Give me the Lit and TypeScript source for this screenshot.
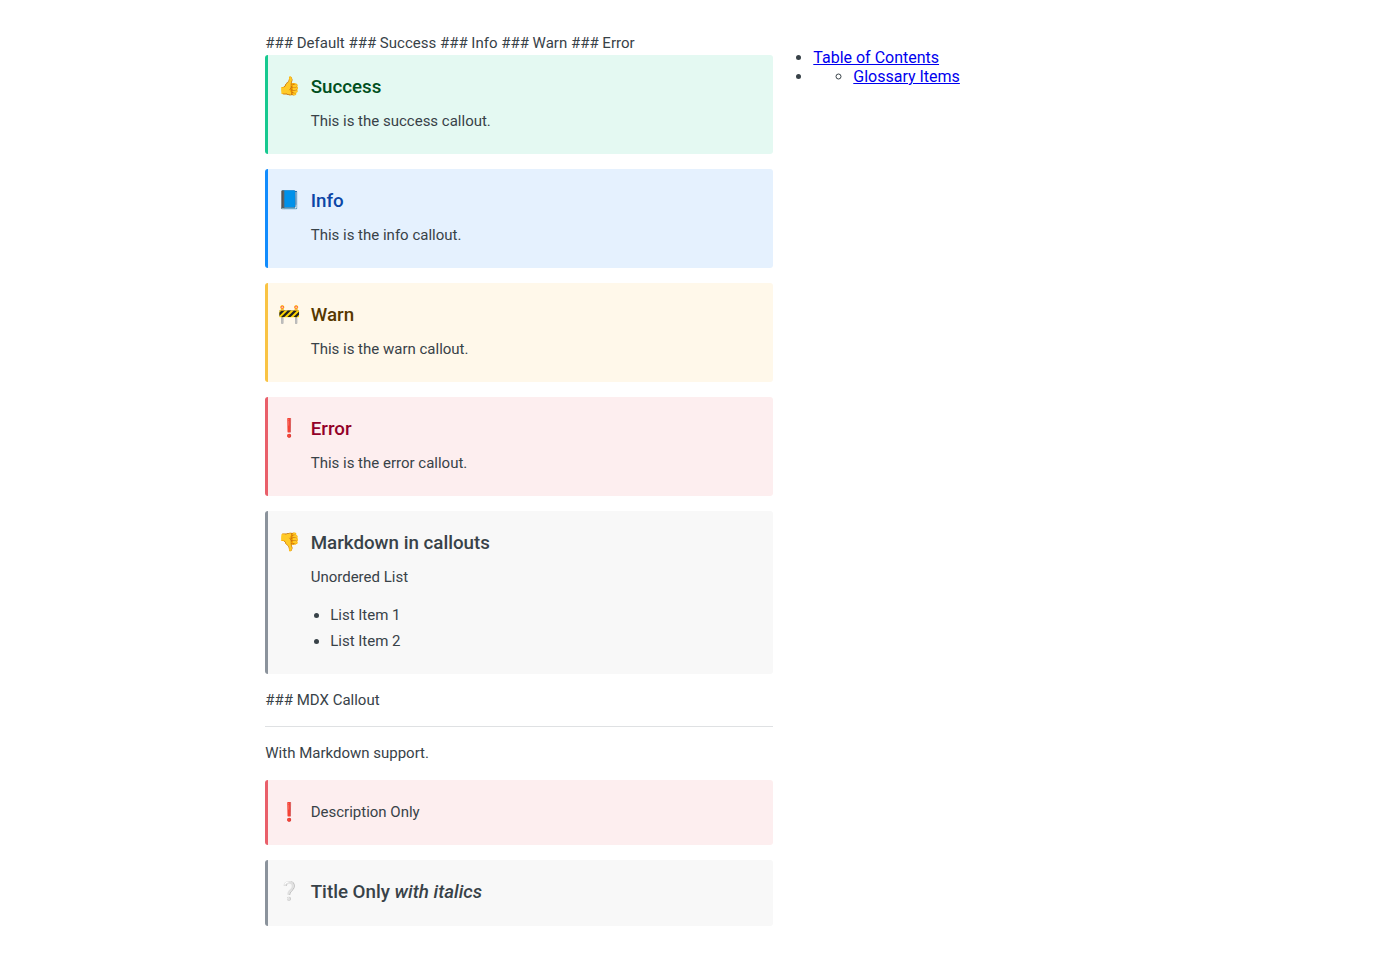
import { LitElement, html, css, nothing, TemplateResult } from "lit";
import { customElement, property } from "lit/decorators.js";

@customElement("rm-callout")
class Callout extends LitElement {
  @property() icon = "";
  @property({ attribute: false }) heading: TemplateResult | string = "";
  @property({ attribute: false }) body: TemplateResult | string = "";
  @property({ reflect: true }) theme = "default";
  static styles = css`
    :host {
      --background: #f8f8f8;
      --border: #8b939c;
      --title: #384248;
      display: block;
      margin-bottom: 15px;
    }
    :host([theme="okay"]) { --background: #e4f9f2; --border: #17c990; --title: #004f20; }
    :host([theme="info"]) { --background: #e5f1fe; --border: #118cfd; --title: #0b46a6; }
    :host([theme="warn"]) { --background: #fff8ea; --border: #f9c343; --title: #573800; }
    :host([theme="error"]) { --background: #fdeeef; --border: #e95f6a; --title: #930028; }
    .callout {
      display: block;
      margin: 0;
      padding: 20px 20px 20px 42.4px;
      border-left: 3px solid var(--border);
      border-radius: 3px;
      background: var(--background);
      color: #384248;
      font-size: 15px;
      line-height: 25px;
    }
    .heading {
      margin: 0;
      padding-bottom: 2px;
      color: var(--title);
      font-size: 18.75px;
      font-weight: 500;
      line-height: 24px;
    }
    .icon {
      float: left;
      width: 33px;
      margin-left: -33px;
      color: #384248;
      font-size: 18px;
      line-height: 24px;
    }
    .icon.titled { line-height: 22px; }
    .body { margin: 0; }
    .heading + .body { margin-top: 8px; }
    .body p { margin: 0 0 12px; }
    .body ul { margin: 0; padding-left: 19.5px; line-height: 26px; }
  `;
  render() {
    return html`<blockquote class="callout">
      <span class="icon ${this.heading ? "titled" : ""}">${this.icon}</span>
      ${this.heading ? html`<h3 class="heading">${this.heading}</h3>` : nothing}
      ${this.body ? html`<div class="body">${this.body}</div>` : nothing}
    </blockquote>`;
  }
}

@customElement("app-root")
class AppRoot extends LitElement {
  static styles = css`
    :host { display: block; font-family: Roboto, "Liberation Sans", sans-serif; color: #384248; }
    .page { display: flex; width: 869.4px; margin: 0 auto; padding-top: 31px; }
    .article { width: 507.7px; font-size: 15px; line-height: 24px; }
    .article p { margin: 0 0 16px; line-height: 22px; }
    .article .mdx { margin-bottom: 15px; }
    .rule { height: 1px; margin: 0 0 15px; border: 0; background: #dfe1e3; }
    .toc { margin: 17px 0 0; padding: 0 0 0 40.3px; font-size: 16px; line-height: 19px; }
    .toc ul { margin: 0; padding-left: 40px; }
    .toc a { color: #0000ee; }
  `;
  render() {
    return html`<main class="page">
      <article class="article">
        <div>### Default ### Success ### Info ### Warn ### Error</div>
        <rm-callout theme="okay" icon="👍" .heading=${"Success"} .body=${"This is the success callout."}></rm-callout>
        <rm-callout theme="info" icon="📘" .heading=${"Info"} .body=${"This is the info callout."}></rm-callout>
        <rm-callout theme="warn" icon="🚧" .heading=${"Warn"} .body=${"This is the warn callout."}></rm-callout>
        <rm-callout theme="error" icon="❗️" .heading=${"Error"} .body=${"This is the error callout."}></rm-callout>
        <rm-callout icon="👎" .heading=${"Markdown in callouts"}
          .body=${html`<p>Unordered List</p><ul><li>List Item 1</li><li>List Item 2</li></ul>`}></rm-callout>
        <p class="mdx">### MDX Callout</p>
        <hr class="rule" />
        <p>With Markdown support.</p>
        <rm-callout theme="error" icon="❗️" .body=${"Description Only"}></rm-callout>
        <rm-callout icon="❔" .heading=${html`Title Only <em>with italics</em>`}></rm-callout>
      </article>
      <nav>
        <ul class="toc">
          <li><a href="#">Table of Contents</a></li>
          <li><ul><li><a href="#">Glossary Items</a></li></ul></li>
        </ul>
      </nav>
    </main>`;
  }
}
